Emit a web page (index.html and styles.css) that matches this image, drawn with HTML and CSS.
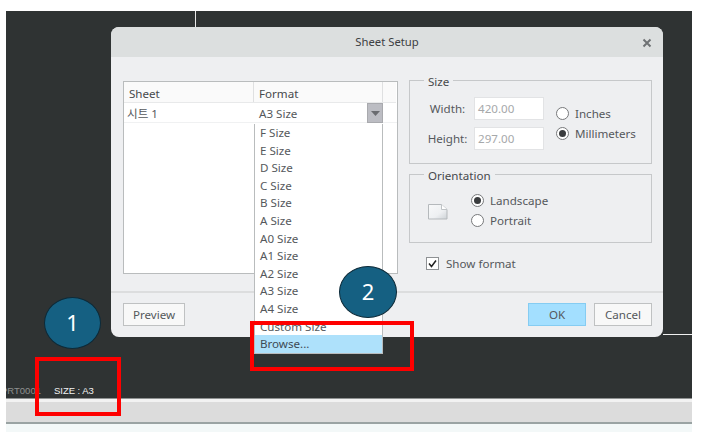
FILE: index.html
```html
<!DOCTYPE html>
<html lang="en">
<head>
<meta charset="utf-8">
<title>Sheet Setup</title>
<link rel="stylesheet" href="styles.css">
</head>
<body>
<div class="canvas">
  <div class="vline"></div>
  <div class="hline"></div>
  <div class="status"><span class="prt">PRT0001</span><span class="size">SIZE : A3</span></div>

  <div class="dialog">
    <div class="titlebar">
      <span class="title">Sheet Setup</span>
      <svg class="close" width="10" height="10" viewBox="0 0 10 10"><path d="M1.5 1.5l7 7M8.5 1.5l-7 7" stroke="#6f7274" stroke-width="2"/></svg>
    </div>
    <div class="body">
      <div class="table">
        <div class="thead">
          <div class="th th-sheet">Sheet</div>
          <div class="th th-format">Format</div>
          <div class="th th-end"></div>
        </div>
        <div class="tr">
          <div class="td-sheet">시트 1</div>
          <div class="td-format">A3 Size
            <div class="arrow"><svg width="9" height="5" viewBox="0 0 9 5"><path d="M0 0h9L4.5 5z" fill="#6a6c70"/></svg></div>
          </div>
        </div>
      </div>
      <div class="side">
        <fieldset class="group size-group">
          <legend>Size</legend>
          <div class="size-grid">
            <div class="fields">
              <div class="field"><label class="lbl">Width:</label><span class="input">420.00</span></div>
              <div class="field"><label class="lbl">Height:</label><span class="input">297.00</span></div>
            </div>
            <div class="radios">
              <div class="radio"><span class="dot"></span>Inches</div>
              <div class="radio"><span class="dot on"></span>Millimeters</div>
            </div>
          </div>
        </fieldset>
        <fieldset class="group orient-group">
          <legend>Orientation</legend>
          <div class="orient">
            <svg class="page" width="20" height="16" viewBox="0 0 20 16"><defs><linearGradient id="pg" x1="0" y1="0" x2="1" y2="1"><stop offset="0" stop-color="#f8f9fa"/><stop offset="0.6" stop-color="#eef0f2"/><stop offset="1" stop-color="#cdd2d6"/></linearGradient></defs><path d="M.5.5h13l5.500 5v9.500H.5z" fill="url(#pg)" stroke="#b5b9bc"/><path d="M13.500.5v5h5.500" fill="#fff" stroke="#bfc3c6"/></svg>
            <div class="radios">
              <div class="radio"><span class="dot on"></span>Landscape</div>
              <div class="radio"><span class="dot"></span>Portrait</div>
            </div>
          </div>
        </fieldset>
        <div class="check">
          <svg width="13" height="13" viewBox="0 0 13 13"><rect x=".5" y=".5" width="12" height="12" fill="#fff" stroke="#8e9194"/><path d="M3 6.500l2.500 3L10 3.500" fill="none" stroke="#222" stroke-width="1.500"/></svg>
          Show format
        </div>
      </div>
    </div>
    <div class="footer">
      <button class="btn preview">Preview</button>
      <span class="spacer"></span>
      <button class="btn ok">OK</button>
      <button class="btn cancel">Cancel</button>
    </div>
    <ul class="dropdown">
      <li>F Size</li><li>E Size</li><li>D Size</li><li>C Size</li><li>B Size</li><li>A Size</li><li>A0 Size</li><li>A1 Size</li><li>A2 Size</li><li>A3 Size</li><li>A4 Size</li><li>Custom Size</li><li class="sel">Browse...</li>
    </ul>
  </div>

  <div class="circle c1">1</div>
  <div class="circle c2">2</div>
  <div class="redbox r1"></div>
  <div class="redbox r2"></div>
</div>
<div class="bar"></div>
<div class="under"></div>
</body>
</html>
```

FILE: styles.css
```css
* { box-sizing: border-box; }
html, body { margin: 0; height: 100%; background: #fff; overflow: hidden; }
body { padding: 11px 23px 0 6px; font-family: "Noto Sans", "Open Sans", sans-serif; font-size: 11.600px; color: #55585c; }

.canvas { position: relative; height: 388px; background: #2f3333; border-bottom: 1px solid #8f9292; }
.vline { position: absolute; left: 189px; top: 0; width: 1px; height: 16px; background: #e8e8e8; }
.hline { position: absolute; left: 657px; top: 323px; width: 29px; height: 1px; background: #f0f0f0; }

.status { position: absolute; left: 0; top: 374px; display: flex; font-family: "Liberation Sans", sans-serif; font-size: 9.500px; line-height: 12px; white-space: nowrap; }
.prt { width: 48px; color: #8e9090; overflow: hidden; text-indent: -5px; }
.size { color: #f2f2f2; letter-spacing: -.05px; }

.dialog { position: absolute; left: 105px; top: 16px; width: 552px; height: 310px; background: #eeeff1; border-radius: 8px; display: flex; flex-direction: column; }
.titlebar { height: 30px; flex: none; background: #dcdfdf; border-radius: 8px 8px 0 0; display: flex; align-items: center; justify-content: center; position: relative; }
.title { color: #3d4043; line-height: 16px; font-size: 11.300px; margin-top: -1px; }
.close { position: absolute; right: 11px; top: 11px; }

.body { flex: 1; display: flex; gap: 11px; padding: 24px 11px 0 12px; }
.table { width: 275px; height: 193px; border: 1px solid #b9bcbd; background: #fff; }
.thead { display: flex; height: 21px; background: #fafafa; border-bottom: 1px solid #e8e9ea; margin-right: 1px; color: #47494c; }
.th { line-height: 23px; border-right: 1px solid #dfe0e1; }
.th-sheet { width: 130px; padding-left: 5px; }
.th-format { width: 129px; padding-left: 5px; }
.th-end { width: 13px; border-right: 0; }
.tr { display: flex; height: 20px; border-bottom: 1px solid #f0f1f2; }
.td-sheet { width: 130px; padding-left: 3px; line-height: 21px; font-family: "Noto Sans", "Noto Sans CJK KR", sans-serif; }
.td-format { width: 129px; padding-left: 5px; line-height: 21px; position: relative; }
.arrow { position: absolute; right: 0; top: 0; width: 16px; height: 20px; background: #bcbdc3; border: 1px solid #a9aaae; display: flex; align-items: center; justify-content: center; }
.arrow svg { display: block; }

.side { width: 243px; flex: none; display: flex; flex-direction: column; }
.group { margin: 0; padding: 0; border: 1px solid #c6c8ca; min-width: 0; }
.group legend { margin-left: 14px; padding: 3px 4px 0; line-height: 16px; color: #47494c; }
.size-group { height: 93px; margin-top: -10px; }
.orient-group { height: 78px; margin-top: 1px; }
.size-grid { display: flex; padding-top: 7px; }
.fields { display: flex; flex-direction: column; gap: 7px; width: 134px; }
.field { display: flex; align-items: center; height: 23px; }
.lbl { width: 64px; flex: none; text-align: center; margin-left: -2px; margin-right: 2px; padding-left: 15px; white-space: nowrap; }
.input { width: 70px; height: 23px; background: #fff; border: 1px solid #e2e3e5; color: #a6a8aa; padding-left: 3px; line-height: 22px; }
.size-grid .radios { padding: 8px 0 0 12px; }
.radios { display: flex; flex-direction: column; gap: 3px; }
.radio { display: flex; align-items: center; gap: 6px; height: 17px; white-space: nowrap; }
.dot { width: 13px; height: 13px; border-radius: 50%; background: #fff; border: 1px solid #77797b; position: relative; flex: none; }
.dot.on::after { content: ""; position: absolute; inset: 2px; border-radius: 50%; background: #3a3c3e; }
.orient { display: flex; align-items: flex-start; padding-top: 8px; }
.page { margin: 12px 0 0 18px; }
.orient .radios { margin-left: 23px; }
.check { display: flex; align-items: center; gap: 7px; margin: 12px 0 0 17px; height: 17px; }
.check svg { flex: none; }

.footer { height: 46px; flex: none; border-top: 2px solid #dcddde; display: flex; align-items: center; gap: 8px; padding: 0 11px 2px 12px; }
.spacer { flex: 1; }
.btn { font: inherit; color: #55585c; height: 23px; padding: 0; background: #f8f8f8; border: 1px solid #bfc1c2; }
.preview { width: 62px; }
.ok { width: 58px; background: #a3dfff; border-color: #85ccf2; }
.cancel { width: 58px; }

.dropdown { position: absolute; left: 143px; top: 97px; width: 129px; height: 230px; margin: 0; padding: 0; list-style: none; background: #fff; border: 1px solid #b9bcbd; border-top: 0; }
.dropdown li { height: 17.600px; line-height: 17px; padding-left: 5px; }
.dropdown .sel { background: #aee1fb; color: #3d4a55; height: 18px; }

.circle { position: absolute; border-radius: 50%; background: #156082; border: 1px solid #0d2a38; color: #fff; font-size: 22px; line-height: 1; padding-bottom: 2px; display: flex; align-items: center; justify-content: center; }
.c1 { left: 38px; top: 286px; width: 57px; height: 52px; }
.c2 { left: 333px; top: 255px; width: 58px; height: 52px; }
.redbox { position: absolute; border: 4px solid #fe0000; }
.r1 { left: 29px; top: 346px; width: 86px; height: 59px; }
.r2 { left: 244px; top: 310px; width: 164px; height: 50px; }

.bar { height: 25px; background: #dcdcdc; border-top: 3px solid #f2f2f2; border-bottom: 2px solid #9aa3a3; }
.under { height: 8px; background: #f3f8f8; }
```
